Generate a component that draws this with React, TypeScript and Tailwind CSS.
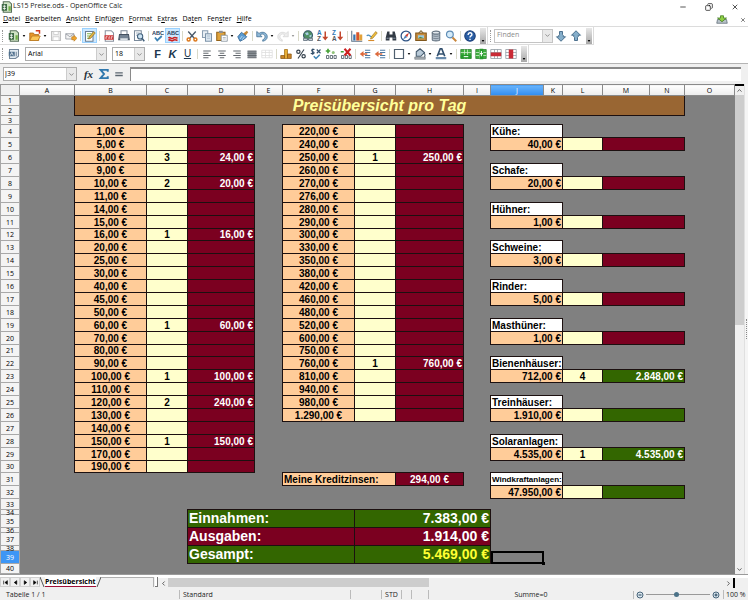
import React from "react";
import clsx from "clsx";
import { ChevronDown, ChevronLeft, ChevronRight, ChevronUp, Copy, Minus, X } from "lucide-react";

type Kind = "title" | "price" | "priceRight" | "count" | "loss" | "gain" | "label" | "small" | "gainTotal" | "lossTotal" | "result" | "interest" | "interestValue";

interface Cell {
  text?: string;
  kind: Kind;
  cols?: number;
  rows?: number;
  right?: boolean;
}

const COLUMNS = [
  { name: "A", width: "w-[55px]" },
  { name: "B", width: "w-[72px]" },
  { name: "C", width: "w-[41px]" },
  { name: "D", width: "w-[67px]" },
  { name: "E", width: "w-[28px]" },
  { name: "F", width: "w-[72px]" },
  { name: "G", width: "w-[41px]" },
  { name: "H", width: "w-[68px]" },
  { name: "I", width: "w-[27px]" },
  { name: "J", width: "w-[53px]" },
  { name: "K", width: "w-[19px]" },
  { name: "L", width: "w-[40px]" },
  { name: "M", width: "w-[47px]" },
  { name: "N", width: "w-[35px]" },
  { name: "O", width: "" },
];

// rows that differ from the default height of 13
const ROW_HEIGHTS: Record<number, number> = {
  1: 10, 2: 10, 3: 9, 12: 12, 21: 12, 30: 12, 33: 11, 34: 5, 36: 5, 38: 5, 40: 10,
};
const ROWS = Array.from({ length: 40 }, (_, i) => i + 1);
const rowHeight = (row: number) => ROW_HEIGHTS[row] ?? 13;

const KIND_STYLES: Record<Kind, string> = {
  title: "bg-[#996633] text-[#ffff99] text-center italic text-[16px] leading-[17px]",
  price: "bg-[#ffcc99] text-center",
  priceRight: "bg-[#ffcc99] text-right",
  count: "bg-[#ffffcc] text-center",
  loss: "bg-[#7b0020] text-white text-right",
  gain: "bg-[#336600] text-white text-right",
  label: "bg-white text-left",
  small: "bg-white text-left text-[8px]",
  gainTotal: "bg-[#336600] text-white text-[14px] leading-[15px]",
  lossTotal: "bg-[#7b0020] text-white text-[14px] leading-[15px]",
  result: "bg-[#336600] text-[#ffff33] text-[14px] leading-[15px]",
  interest: "bg-[#ffcc99] text-left",
  interestValue: "bg-[#7b0020] text-white text-center",
};

const LEFT = ["1", "5", "8", "9", "10", "11", "14", "15", "16", "20", "25", "30", "40", "45", "50", "60", "70", "80", "90", "100", "110", "120", "130", "140", "150", "170", "190"];
const MIDDLE = ["220", "240", "250", "260", "270", "276", "280", "290", "300", "330", "350", "380", "420", "460", "480", "520", "600", "750", "760", "810", "940", "980", "1.290"];

const LEFT_SOLD: Record<string, [string, string]> = {
  "8": ["3", "24"],
  "10": ["2", "20"],
  "16": ["1", "16"],
  "60": ["1", "60"],
  "100": ["1", "100"],
  "120": ["2", "240"],
  "150": ["1", "150"],
};
const MIDDLE_SOLD: Record<string, [string, string]> = {
  "250": ["1", "250"],
  "760": ["1", "760"],
};

const RIGHT = [
  { name: "Kühe:", price: "40" },
  { name: "Schafe:", price: "20" },
  { name: "Hühner:", price: "1" },
  { name: "Schweine:", price: "3" },
  { name: "Rinder:", price: "5" },
  { name: "Masthüner:", price: "1" },
  { name: "Bienenhäuser:", price: "712", count: "4", sum: "2.848", gain: true },
  { name: "Treinhäuser:", price: "1.910", gain: true },
  { name: "Solaranlagen:", price: "4.535", count: "1", sum: "4.535", gain: true },
  { name: "Windkraftanlagen:", price: "47.950", gain: true, small: true },
];

const euro = (value?: string) => (value ? `${value},00 €` : "");

const cells: Record<string, Cell> = {
  B1: { text: "Preisübersicht pro Tag", kind: "title", cols: 13, rows: 2 },
  F31: { text: "Meine Kreditzinsen:", kind: "interest", cols: 2 },
  H31: { text: euro("294"), kind: "interestValue" },
  D34: { text: "Einnahmen:", kind: "gainTotal", cols: 3, rows: 2 },
  G34: { text: euro("7.383"), kind: "gainTotal", cols: 3, rows: 2, right: true },
  D36: { text: "Ausgaben:", kind: "lossTotal", cols: 3, rows: 2 },
  G36: { text: euro("1.914"), kind: "lossTotal", cols: 3, rows: 2, right: true },
  D38: { text: "Gesampt:", kind: "gainTotal", cols: 3, rows: 2 },
  G38: { text: euro("5.469"), kind: "result", cols: 3, rows: 2, right: true },
};

const addBlock = (names: string[], list: string[], sold: Record<string, [string, string]>) => {
  list.forEach((value, i) => {
    const row = i + 4;
    cells[names[0] + row] = { text: euro(value), kind: "price" };
    cells[names[1] + row] = { text: sold[value]?.[0], kind: "count" };
    cells[names[2] + row] = { text: euro(sold[value]?.[1]), kind: "loss" };
  });
};
addBlock(["B", "C", "D"], LEFT, LEFT_SOLD);
addBlock(["F", "G", "H"], MIDDLE, MIDDLE_SOLD);

RIGHT.forEach((item, i) => {
  const row = 4 + i * 3;
  cells["J" + row] = { text: item.name, kind: item.small ? "small" : "label", cols: 2 };
  cells["J" + (row + 1)] = { text: euro(item.price), kind: "priceRight", cols: 2 };
  cells["L" + (row + 1)] = { text: item.count, kind: "count" };
  cells["M" + (row + 1)] = { text: euro(item.sum), kind: item.gain ? "gain" : "loss", cols: 2 };
});

// cells hidden below a merged one
const covered = new Set<string>();
Object.entries(cells).forEach(([key, cell]) => {
  const start = COLUMNS.findIndex((c) => c.name === key[0]);
  const row = Number(key.slice(1));
  for (let r = 0; r < (cell.rows ?? 1); r++) {
    for (let c = 0; c < (cell.cols ?? 1); c++) {
      if (r || c) covered.add(COLUMNS[start + c].name + (row + r));
    }
  }
});

/* ---------- icons ---------- */

const Icon = ({ children }: { children: React.ReactNode }) => (
  <svg viewBox="0 0 16 16" className="h-3 w-3 shrink-0" fill="none" strokeWidth="1.4">
    {children}
  </svg>
);

const CalcIcon = () => (
  <Icon>
    <path d="M3 1h8l3 3v11H3z" fill="#cfe3c4" stroke="#58705a" />
    <path d="M1 4h7v9H1z" fill="#3f6b46" />
    <path d="M2.500 7h4M2.500 10h4M4.500 5v7" stroke="#fff" strokeWidth="1" />
    <path d="M10 7h3v6h-3z" fill="#6fae45" />
  </Icon>
);
const OpenIcon = () => (
  <Icon>
    <path d="M1 4h5l1 2h6v8H1z" fill="#e8972a" stroke="#a8651a" strokeWidth="1" />
    <path d="M1 14l3-6h11l-3 6z" fill="#fbc657" stroke="#b8771f" strokeWidth="1" />
    <path d="M9 1h5v4" stroke="#d33c1c" strokeWidth="2" />
  </Icon>
);
const SaveIcon = () => (
  <Icon>
    <path d="M2 2h12v12H2z" fill="#ececec" stroke="#c0c0c0" />
    <path d="M5 2h6v4H5zM4 9h8v5H4z" fill="#fff" stroke="#c8c8c8" strokeWidth="1" />
  </Icon>
);
const MailIcon = () => (
  <Icon>
    <path d="M1 5h11v7H1z" fill="#f4f4f4" stroke="#8c9099" strokeWidth="1" />
    <path d="M1 5l5.500 4L12 5" stroke="#8c9099" strokeWidth="1" />
    <path d="M9 9h3V7l4 4-4 4v-2H9z" fill="#f0a42c" stroke="#ad6b12" strokeWidth="0.700" />
  </Icon>
);
const EditIcon = () => (
  <Icon>
    <path d="M2 2h10v13H2z" fill="#fff" stroke="#6a7f94" />
    <path d="M4 5h6M4 8h5M4 11h3" stroke="#7db54a" />
    <path d="M6 12l1-3 6-7 2 2-6 7z" fill="#e6b83d" stroke="#6b5622" strokeWidth="0.800" />
  </Icon>
);
const PdfIcon = () => (
  <Icon>
    <path d="M3 1h8l3 3v11H3z" fill="#fff" stroke="#8a93a0" />
    <path d="M2 7h12v6H2z" fill="#cf3434" />
    <path d="M4 12V9h2M8 12V9h1M11 12V9h2" stroke="#fff" strokeWidth="1" />
  </Icon>
);
const PrintIcon = () => (
  <Icon>
    <path d="M4 1h8v6H4z" fill="#fff" stroke="#7b8795" />
    <path d="M2 6h12l1 7H1z" fill="#738292" stroke="#445160" />
    <path d="M3 11h10v3H3z" fill="#d9dfe5" />
  </Icon>
);
const PreviewIcon = () => (
  <Icon>
    <path d="M2 1h9v13H2z" fill="#fff" stroke="#7b8a9b" />
    <path d="M4 4h5M4 7h2" stroke="#9fb1c2" />
    <circle cx="9.500" cy="8.500" r="3.500" fill="#cde4f3" stroke="#43617c" />
    <path d="M12 11l3 4" stroke="#43617c" strokeWidth="2" />
  </Icon>
);
const SpellIcon = ({ auto }: { auto?: boolean }) => (
  <Icon>
    <text x="8" y="7" textAnchor="middle" fontSize="7.500" fontWeight="bold" fill="#26415c" className="font-['Liberation_Sans',sans-serif]">ABC</text>
    {auto ? (
      <path d="M2 11c2-3 4 2 6 0s4-1 6 0M2 14c2-3 4 2 6 0s4-1 6 0" stroke="#cc2020" strokeWidth="2" />
    ) : (
      <path d="M4 10l3 4 6-6" stroke="#3d83b5" strokeWidth="2.400" />
    )}
  </Icon>
);
const CutIcon = () => (
  <Icon>
    <path d="M3 2l8 9M13 2L5 11" stroke="#4b5b6c" strokeWidth="1.800" />
    <circle cx="3.500" cy="12.500" r="2" stroke="#dd7a1e" strokeWidth="2" />
    <circle cx="12.500" cy="12.500" r="2" stroke="#dd7a1e" strokeWidth="2" />
  </Icon>
);
const CopyIcon = () => (
  <Icon>
    <path d="M2 1h7v9H2z" fill="#e9eff5" stroke="#8a9eb2" />
    <path d="M6 5h8v10H6z" fill="#dce7f1" stroke="#7f95aa" />
    <path d="M8 8h4M8 11h4" stroke="#9cb0c3" strokeWidth="1" />
  </Icon>
);
const PasteIcon = () => (
  <Icon>
    <path d="M1 3h11v11H1z" fill="#dfa33d" stroke="#956318" />
    <path d="M4 1h5v3H4z" fill="#8b8f96" />
    <path d="M7 7h8v8H7z" fill="#fff" stroke="#7a8794" strokeWidth="1" />
    <path d="M9 10h4M9 12h4" stroke="#9aa6b3" strokeWidth="1" />
  </Icon>
);
const BrushIcon = () => (
  <Icon>
    <path d="M13 1l2 2-4 5-3-3z" fill="#c58a3b" />
    <path d="M6 3l7 6-3 3-6 3-3-6z" fill="#5b9bd0" stroke="#2d5f8c" strokeWidth="1" />
    <path d="M4 12l3-4M7 13l3-4" stroke="#d8ebf8" strokeWidth="1" />
  </Icon>
);
const UndoIcon = () => (
  <Icon>
    <path d="M1 2v7h7L5.500 6.500C9 4 12 6 12 9c0 2-1 3-3 4v2c4-1 6-3 6-6 0-5-6-8-11-4.500z" fill="#8fb9d8" stroke="#3c6a8f" strokeWidth="1" />
  </Icon>
);
const RedoIcon = () => (
  <Icon>
    <path d="M15 2v7H8l2.500-2.500C7 4 4 6 4 9c0 2 1 3 3 4v2c-4-1-6-3-6-6 0-5 6-8 11-4.500z" fill="#ededed" stroke="#cfcfcf" strokeWidth="0.800" />
  </Icon>
);
const GlobeIcon = () => (
  <Icon>
    <circle cx="8" cy="7" r="6" fill="#4f8f63" stroke="#38566c" />
    <path d="M4 4l4-1 1 3-3 1zM9 8l4-2-1 4z" fill="#a9cfe8" />
    <path d="M2 11h5v3H2zM9 11h5v3H9z" fill="#c7d0d8" stroke="#566574" strokeWidth="1" />
  </Icon>
);
const SortIcon = ({ top, bottom }: { top: string; bottom: string }) => (
  <Icon>
    <g fontSize="8.500" fontWeight="bold" className="font-['Liberation_Sans',sans-serif]">
      <text x="0" y="7" fill="#2f78b5">{top}</text>
      <text x="0" y="15" fill="#50565c">{bottom}</text>
    </g>
    <path d="M10 2h2v7h3l-4 5-4-5h3z" fill="#c2482e" />
  </Icon>
);
const ChartIcon = () => (
  <Icon>
    <path d="M1 1v14h14" stroke="#5d7288" />
    <path d="M3 6h3v8H3z" fill="#3775ae" />
    <path d="M7 3h4v11H7z" fill="#d7562b" />
    <path d="M11 6h4v8h-4z" fill="#e2a23b" />
  </Icon>
);
const DrawIcon = () => (
  <Icon>
    <path d="M1 8c3-4 5 3 8 1" stroke="#4b8ec0" strokeWidth="1.600" />
    <path d="M6 12l1-3 6-7 2 2-6 7z" fill="#f0bd3b" stroke="#916a1a" strokeWidth="0.800" />
    <path d="M3 14h8" stroke="#d78a2b" strokeWidth="1.500" />
  </Icon>
);
const FindIcon = () => (
  <Icon>
    <path d="M3 2h3v4h4V2h3l2 8v4h-5v-4H6v4H1v-4z" fill="#333b45" />
    <path d="M2 11h3M11 11h3" stroke="#8796a6" />
  </Icon>
);
const CompassIcon = () => (
  <Icon>
    <circle cx="8" cy="8" r="6.500" fill="#fff" stroke="#2f5485" strokeWidth="1.700" />
    <path d="M12 3.500L9.500 9.500 7 7z" fill="#d03a2c" />
    <path d="M4 12.500L7 7l2.500 2.500z" fill="#4d82ba" />
  </Icon>
);
const GalleryIcon = () => (
  <Icon>
    <path d="M5 4l3-3 3 3" stroke="#7a6131" />
    <path d="M1 4h14v10H1z" fill="#c78d3e" stroke="#80571c" />
    <path d="M4 7h8v4H4z" fill="#9ccbe4" />
    <path d="M4 11l3-2 5 2z" fill="#4e8b42" />
  </Icon>
);
const DatabaseIcon = () => (
  <Icon>
    <path d="M3 3v10c0 2 10 2 10 0V3" fill="#b4bfca" stroke="#677583" />
    <ellipse cx="8" cy="3.500" rx="5" ry="2" fill="#e3e9ee" stroke="#677583" />
    <path d="M3 7c1 2 9 2 10 0M3 10c1 2 9 2 10 0" stroke="#677583" strokeWidth="1" />
  </Icon>
);
const ZoomIcon = () => (
  <Icon>
    <circle cx="6.500" cy="6" r="4.500" fill="#d5ebf9" stroke="#5f8cb5" strokeWidth="1.600" />
    <path d="M10 10l5 5" stroke="#c9863b" strokeWidth="2.500" />
  </Icon>
);
const HelpIcon = () => (
  <Icon>
    <circle cx="8" cy="8" r="7" fill="#2b5fa5" stroke="#1c3f77" />
    <path d="M5.500 6.500c0-4 5.500-3.500 5 0C10.300 8 8 8 8 10M8 11.500v1.800" stroke="#fff" strokeWidth="1.900" />
  </Icon>
);
const FindArrow = ({ up }: { up?: boolean }) => (
  <Icon>
    <path
      d={up ? "M8 1l6 6h-3v2l-1 1v4H6v-4L5 9V7H2z" : "M8 15l6-6h-3V7l-1-1V2H6v4L5 7v2H2z"}
      fill="#86afcb"
      stroke="#3f6584"
      strokeWidth="1.200"
    />
  </Icon>
);
const StylesIcon = () => (
  <Icon>
    <path d="M2 2h12v9l-4 3H2z" fill="#e3ebf2" stroke="#73869a" />
    <path d="M1 5h8v6H1z" fill="#4f708e" />
    <path d="M3 10l2-4 2 4" stroke="#fff" strokeWidth="1" />
    <path d="M11 5v6" stroke="#73869a" />
  </Icon>
);
const AlignIcon = ({ d }: { d: string }) => (
  <Icon>
    <path d={d} stroke="#5e6369" strokeWidth="1.300" />
  </Icon>
);
const JustifyIcon = () => (
  <Icon>
    <path d="M2 4h12v9H2z" fill="#8c9298" />
    <path d="M2 4h12M2 7h12M2 10h12M2 13h12" stroke="#5e6369" strokeWidth="1.200" />
  </Icon>
);
const MergeIcon = () => (
  <Icon>
    <path d="M1 3h14v10H1zM1 6h14M1 10h14M6 3v10M11 3v10" stroke="#dcdcdc" strokeWidth="1" />
  </Icon>
);
const CoinsIcon = () => (
  <Icon>
    <path d="M6 2h4v12H6z" fill="#e6ad35" stroke="#a36f16" strokeWidth="1" />
    <path d="M1 10h5v4H1zM10 8h5v6h-5z" fill="#c98426" stroke="#8c5a14" strokeWidth="1" />
  </Icon>
);
const PercentIcon = () => (
  <Icon>
    <circle cx="4.500" cy="5" r="2.200" stroke="#34404c" strokeWidth="1.600" />
    <circle cx="11.500" cy="11" r="2.200" stroke="#34404c" strokeWidth="1.600" />
    <path d="M12 2L4 14" stroke="#34404c" strokeWidth="1.500" />
  </Icon>
);
const StandardIcon = () => (
  <Icon>
    <path d="M6 2C2 1 1 4 4 5s1 4-3 2M3.500 1v8M9 2l5 5M14 2L9 7" stroke="#34506b" strokeWidth="1.500" />
    <path d="M5 11l3 3 5-5" stroke="#3d83b5" strokeWidth="2" />
  </Icon>
);
const DecimalIcon = ({ remove }: { remove?: boolean }) => (
  <Icon>
    <path d="M2 10h3v4H2zM7 10h3v4H7zM12 10h3v4h-3z" stroke="#4a5763" strokeWidth="1.100" />
    {remove ? (
      <>
        <path d="M6 1l8 9M14 1l-8 9" stroke="#cc2222" strokeWidth="2.800" />
        <path d="M1 5h4" stroke="#3f9a34" strokeWidth="2" />
      </>
    ) : (
      <>
        <path d="M1 4h6M4 1v6" stroke="#45a136" strokeWidth="2.200" />
        <circle cx="11" cy="6" r="2" fill="#8fc27a" />
      </>
    )}
  </Icon>
);
const IndentIcon = () => (
  <Icon>
    <path d="M8 3h7M8 6h7M8 10h7M8 13h7" stroke="#4b79a3" strokeWidth="1.400" />
    <path d="M1 8l5-4v3h5v2H6v3z" fill="#dd6a3c" />
  </Icon>
);
const BorderIcon = () => (
  <Icon>
    <path d="M2 2h12v12H2z" fill="#fff" stroke="#4f5f6f" strokeWidth="1.600" />
  </Icon>
);
const BucketIcon = () => (
  <Icon>
    <path d="M3 5l5-4 6 5-5 5H3z" fill="#b9cad8" stroke="#42586c" />
    <path d="M13 6c2 2 2 4 1 6" stroke="#42586c" />
    <path d="M1 12h14v3H1z" fill="#a7adb3" stroke="#707880" strokeWidth="0.800" />
  </Icon>
);
const FontColorIcon = () => (
  <Icon>
    <path d="M3 11L7 1h2l4 10M5 8h6" stroke="#314f6d" strokeWidth="2.200" />
    <path d="M1 12h14v3H1z" fill="#6a8cad" />
  </Icon>
);
const InsertIcon = ({ column }: { column?: boolean }) => (
  <Icon>
    <path d="M1 2h14v12H1z" fill="#3fae3f" stroke="#2c7d30" strokeWidth="1" />
    <path d="M1 6h14M1 10h14M6 2v12M10 2v12" stroke="#d6efd3" strokeWidth="1" />
    <path d={column ? "M6 1h5v14H6z" : "M1 9h14v5H1z"} fill="#259a2b" />
    <path d={column ? "M8.500 4v7M6.500 7.500h4" : "M5 11.500h6"} stroke="#fff" strokeWidth="1.400" />
  </Icon>
);
const DeleteIcon = ({ column }: { column?: boolean }) => (
  <Icon>
    <path d="M1 2h14v12H1zM1 6h14M1 10h14M6 2v12M10 2v12" stroke="#8c979f" strokeWidth="1" />
    <path d={column ? "M5 2h6v12H5z" : "M1 6h14v5H1z"} fill="#c92a35" />
  </Icon>
);
const UpdateIcon = () => (
  <svg viewBox="0 0 16 12" className="h-[9px] w-3" fill="none">
    <path d="M2 6l-1 5h14l-1-5z" fill="#b8c2ca" stroke="#5b6873" />
    <path d="M6 1h4v3h4l-6 5-6-5h4z" fill="#8fcf45" stroke="#3f7a1c" />
  </svg>
);

/* ---------- toolbar parts ---------- */

const Tool = ({ label, active, children }: { label: string; active?: boolean; children: React.ReactNode }) => (
  <button
    aria-label={label}
    className={clsx(
      "flex h-[15px] w-[15px] shrink-0 items-center justify-center",
      active && "border border-[#99d1ff] bg-[#cce8ff]"
    )}
  >
    {children}
  </button>
);

const Arrow = ({ label, muted }: { label: string; muted?: boolean }) => (
  <button aria-label={label} className="flex h-[15px] w-[6px] shrink-0 items-center justify-center">
    <svg viewBox="0 0 4 3" className="h-[2px] w-[4px]">
      <path d="M0 0h4L2 3z" fill={muted ? "#999" : "#111"} />
    </svg>
  </button>
);

const Sep = () => (
  <div className="flex w-1 shrink-0 justify-center">
    <div className="h-[10px] w-px bg-[#d9d9c8]" />
  </div>
);

const Grip = () => <div className="ml-[2px] mr-[3px] h-3 w-px shrink-0 border-l border-dotted border-[#999]" />;

const Overflow = () => (
  <button
    aria-label="Weitere Symbole"
    className="ml-[3px] flex h-[16px] w-[6px] shrink-0 items-end justify-center bg-linear-to-b from-[#e8e8e8] to-[#a8a8a8] pb-[2px]"
  >
    <svg viewBox="0 0 4 3" className="h-[2px] w-[4px]">
      <path d="M0 0h4L2 3z" fill="#000" />
    </svg>
  </button>
);

const DropButton = ({ label }: { label: string }) => (
  <button aria-label={label} className="flex w-[10px] shrink-0 items-center justify-center border-l border-[#ccc] bg-[#e9e9e9]">
    <ChevronDown className="h-[7px] w-[7px] text-[#555]" />
  </button>
);

const Select = ({ label, value, width }: { label: string; value: string; width: string }) => (
  <div className={clsx("relative mr-[5px] flex h-[14px] shrink-0 border border-[#acacac] bg-white", width)}>
    <select aria-label={label} defaultValue={value} className="w-full appearance-none bg-transparent pl-[2px] text-[7px] leading-[10px] outline-none">
      <option>{value}</option>
    </select>
    <span className="pointer-events-none absolute inset-y-0 right-0 flex w-[10px] items-center justify-center border-l border-[#ccc] bg-[#e9e9e9]">
      <ChevronDown className="h-[7px] w-[7px] text-[#555]" />
    </span>
  </div>
);

/* ---------- window parts ---------- */

const TitleBar = () => (
  <header className="flex h-[13px] items-center pl-[1px] pr-[9px]">
    <CalcIcon />
    <h1 className="flex-1 text-[7px] text-[#222]">LS15 Preise.ods - OpenOffice Calc</h1>
    <div className="flex gap-[18px]">
      <button aria-label="Minimieren"><Minus className="h-2 w-2" /></button>
      <button aria-label="Wiederherstellen"><Copy className="h-2 w-2 -scale-x-100" /></button>
      <button aria-label="Schließen"><X className="h-2 w-2" /></button>
    </div>
  </header>
);

const MENU = [
  ["", "D", "atei"],
  ["", "B", "earbeiten"],
  ["", "A", "nsicht"],
  ["", "E", "infügen"],
  ["", "F", "ormat"],
  ["E", "x", "tras"],
  ["Da", "t", "en"],
  ["Fen", "s", "ter"],
  ["", "H", "ilfe"],
];

const MenuBar = () => (
  <nav className="flex h-[14px] items-center border-b border-[#dcdcdc] pl-[3px] pr-[2px]">
    <div className="flex flex-1 gap-[5px]">
      {MENU.map(([before, key, after]) => (
        <button key={before + key} className="text-[7px] text-black">
          {before}
          <span className="underline">{key}</span>
          {after}
        </button>
      ))}
    </div>
    <button aria-label="Updates" className="mr-[12px]"><UpdateIcon /></button>
    <button aria-label="Dokument schließen"><X className="h-[6px] w-[6px]" /></button>
  </nav>
);

const StandardBar = () => (
  <div className="flex">
    <div className="flex h-[18px] items-center border-b border-r border-[#dcdcdc] pr-[1px]">
      <Grip />
      <Tool label="Neu"><CalcIcon /></Tool>
      <Arrow label="Neu Auswahl" />
      <Tool label="Öffnen"><OpenIcon /></Tool>
      <Arrow label="Öffnen Auswahl" />
      <Tool label="Speichern"><SaveIcon /></Tool>
      <Tool label="E-Mail"><MailIcon /></Tool>
      <Sep />
      <Tool label="Bearbeiten" active><EditIcon /></Tool>
      <Sep />
      <Tool label="PDF"><PdfIcon /></Tool>
      <Tool label="Drucken"><PrintIcon /></Tool>
      <Tool label="Seitenansicht"><PreviewIcon /></Tool>
      <Sep />
      <Tool label="Rechtschreibung"><SpellIcon /></Tool>
      <Tool label="Automatische Prüfung" active><SpellIcon auto /></Tool>
      <Sep />
      <Tool label="Ausschneiden"><CutIcon /></Tool>
      <Tool label="Kopieren"><CopyIcon /></Tool>
      <Tool label="Einfügen"><PasteIcon /></Tool>
      <Arrow label="Einfügen Auswahl" />
      <Tool label="Format übertragen"><BrushIcon /></Tool>
      <Sep />
      <Tool label="Rückgängig"><UndoIcon /></Tool>
      <Arrow label="Rückgängig Auswahl" />
      <Tool label="Wiederherstellen"><RedoIcon /></Tool>
      <Arrow label="Wiederherstellen Auswahl" muted />
      <Sep />
      <Tool label="Hyperlink"><GlobeIcon /></Tool>
      <Tool label="Aufsteigend sortieren"><SortIcon top="A" bottom="Z" /></Tool>
      <Tool label="Absteigend sortieren"><SortIcon top="Z" bottom="A" /></Tool>
      <Sep />
      <Tool label="Diagramm"><ChartIcon /></Tool>
      <Tool label="Zeichnen"><DrawIcon /></Tool>
      <Sep />
      <Tool label="Suchen"><FindIcon /></Tool>
      <Tool label="Navigator"><CompassIcon /></Tool>
      <Tool label="Gallery"><GalleryIcon /></Tool>
      <Tool label="Datenquellen"><DatabaseIcon /></Tool>
      <Tool label="Maßstab"><ZoomIcon /></Tool>
      <Sep />
      <Tool label="Hilfe"><HelpIcon /></Tool>
      <Overflow />
    </div>
    <div className="flex h-[18px] items-center border-b border-r border-[#dcdcdc] pr-[1px]">
      <Grip />
      <div className="flex h-[14px] w-[59px] border border-[#c4c4c4] bg-white">
        <input aria-label="Finden" placeholder="Finden" className="min-w-0 flex-1 pl-[2px] text-[7px] outline-none placeholder:text-[#8a8a8a]" />
        <DropButton label="Suchverlauf" />
      </div>
      <Tool label="Weitersuchen"><FindArrow /></Tool>
      <Tool label="Rückwärts suchen"><FindArrow up /></Tool>
      <Overflow />
    </div>
  </div>
);

const FormatBar = () => (
  <div className="flex border-b border-[#b4b4b4]">
    <div className="flex h-[18px] items-center border-r border-[#dcdcdc] pr-[1px]">
      <Grip />
      <Tool label="Formatvorlagen"><StylesIcon /></Tool>
      <div className="w-1" />
      <Select label="Schriftart" value="Arial" width="w-[82px]" />
      <Select label="Schriftgröße" value="18" width="w-[33px]" />
      <Tool label="Fett"><span className="font-['Liberation_Sans',sans-serif] text-[11px] font-bold leading-none text-[#20364d]">F</span></Tool>
      <Tool label="Kursiv"><span className="font-['Liberation_Sans',sans-serif] text-[11px] font-bold italic leading-none text-[#20364d]">K</span></Tool>
      <Tool label="Unterstrichen"><span className="font-['Liberation_Sans',sans-serif] text-[10px] leading-none text-[#20364d] underline">U</span></Tool>
      <Sep />
      <Tool label="Linksbündig"><AlignIcon d="M3 4h10M3 7h7M3 10h10M3 13h7" /></Tool>
      <Tool label="Zentriert"><AlignIcon d="M3 4h10M5 7h6M3 10h10M5 13h6" /></Tool>
      <Tool label="Rechtsbündig"><AlignIcon d="M3 4h10M6 7h7M3 10h10M6 13h7" /></Tool>
      <Tool label="Blocksatz"><JustifyIcon /></Tool>
      <Tool label="Zellen verbinden"><MergeIcon /></Tool>
      <Sep />
      <Tool label="Währung"><CoinsIcon /></Tool>
      <Tool label="Prozent"><PercentIcon /></Tool>
      <Tool label="Standardformat"><StandardIcon /></Tool>
      <Tool label="Dezimalstelle hinzufügen"><DecimalIcon /></Tool>
      <Tool label="Dezimalstelle löschen"><DecimalIcon remove /></Tool>
      <Sep />
      <Tool label="Einzug vermindern"><IndentIcon /></Tool>
      <Tool label="Einzug erhöhen"><IndentIcon /></Tool>
      <Sep />
      <Tool label="Umrandung"><BorderIcon /></Tool>
      <Arrow label="Umrandung Auswahl" />
      <Tool label="Hintergrundfarbe"><BucketIcon /></Tool>
      <Arrow label="Hintergrundfarbe Auswahl" />
      <Tool label="Schriftfarbe"><FontColorIcon /></Tool>
      <Arrow label="Schriftfarbe Auswahl" />
      <Sep />
      <Tool label="Zeilen einfügen"><InsertIcon /></Tool>
      <Tool label="Spalten einfügen"><InsertIcon column /></Tool>
      <Tool label="Zeilen löschen"><DeleteIcon /></Tool>
      <Tool label="Spalten löschen"><DeleteIcon column /></Tool>
      <Overflow />
    </div>
  </div>
);

const FormulaBar = () => (
  <div className="flex h-5 items-center bg-[#f0f0f0] pl-[3px] pr-[7px]">
    <div className="mr-[4px] flex h-[14px] w-[74px] border border-[#acacac] bg-white">
      <input aria-label="Namensfeld" defaultValue="J39" className="min-w-0 flex-1 pl-[1px] text-[7px] outline-none" />
      <DropButton label="Bereiche" />
    </div>
    <Tool label="Funktionsassistent">
      <span className="font-['Liberation_Serif',serif] text-[11px] font-bold italic leading-none text-[#26303a]">fx</span>
    </Tool>
    <Tool label="Summe">
      <Icon><path d="M13 5V2.500H3.500L8 8l-4.500 5.500H13V11" stroke="#2f77ad" strokeWidth="2.600" /></Icon>
    </Tool>
    <Tool label="Funktion">
      <Icon><path d="M3 6.500h10M3 10h10" stroke="#5b6670" strokeWidth="1.800" /></Icon>
    </Tool>
    <input
      aria-label="Eingabezeile"
      className="ml-[4px] h-[14px] min-w-0 flex-1 border-l border-t-2 border-[#8a8a8a] bg-white px-1 text-[7px] outline-none"
    />
  </div>
);

const Sheet = () => (
  <table className="w-full table-fixed border-collapse bg-[#808080] font-['Liberation_Sans',Arial,sans-serif] text-[10px] font-bold leading-[11px] text-black">
    <colgroup>
      <col className="w-[19px]" />
      {COLUMNS.map((c) => (
        <col key={c.name} className={c.width} />
      ))}
    </colgroup>
    <thead className="font-['Open_Sans',sans-serif] text-[7px] leading-[9px]">
      <tr className="h-[11px]">
        <th className="border border-[#9a9a9a] bg-[#f0f0f0] p-0" />
        {COLUMNS.map((c) => (
          <th
            key={c.name}
            scope="col"
            className={clsx(
              "border border-[#8a8a8a] p-0 font-normal",
              c.name === "J" ? "bg-linear-to-b from-[#69b4fb] to-[#2f8df0] text-white" : "bg-linear-to-b from-white to-[#ececec]"
            )}
          >
            {c.name}
          </th>
        ))}
      </tr>
    </thead>
    <tbody>
      {ROWS.map((row) => (
        <tr key={row} style={{ height: rowHeight(row) }}>
          <th
            scope="row"
            className={clsx(
              "border border-[#a8a8a8] p-0 font-['Open_Sans',sans-serif] text-[7px] font-normal",
              row === 39 ? "bg-[#3d96f5] text-white" : "bg-[#f4f4f4]"
            )}
          >
            <div className="flex items-center justify-center leading-none" style={{ height: rowHeight(row) - 2 }}>
              {row}
            </div>
          </th>
          {COLUMNS.map(({ name }) => {
            const key = name + row;
            if (covered.has(key)) return null;
            const cell = cells[key];
            if (key === "J39") {
              return (
                <td key={key} className="p-0">
                  <div className="relative h-[13px] border-2 border-black">
                    <span className="absolute -bottom-[3px] -right-[3px] h-[3px] w-[3px] bg-black" />
                  </div>
                </td>
              );
            }
            if (!cell) return <td key={key} className="p-0" />;
            return (
              <td
                key={key}
                colSpan={cell.cols}
                rowSpan={cell.rows}
                className={clsx(
                  "whitespace-nowrap border border-[#1c1010] px-px py-0 align-middle",
                  KIND_STYLES[cell.kind],
                  cell.right && "text-right"
                )}
              >
                {cell.text}
              </td>
            );
          })}
        </tr>
      ))}
    </tbody>
  </table>
);

const VerticalScroll = () => (
  <div className="flex w-[10px] shrink-0 flex-col border-r border-[#e0e0e0] bg-[#f0f0f0]">
    <div className="h-[2px] bg-black" />
    <button aria-label="Nach oben" className="flex h-[9px] items-center justify-center"><ChevronUp className="h-[7px] w-[7px]" /></button>
    <div className="flex-1">
      <div className="h-[230px] bg-[#cdcdcd]" />
    </div>
    <button aria-label="Nach unten" className="flex h-[9px] items-center justify-center"><ChevronDown className="h-[7px] w-[7px]" /></button>
  </div>
);

const NAV = [
  { label: "Erste Tabelle", d: "M1 1v6M7 1L3 4l4 3z" },
  { label: "Vorige Tabelle", d: "M6 1L2 4l4 3z" },
  { label: "Nächste Tabelle", d: "M2 1l4 3-4 3z" },
  { label: "Letzte Tabelle", d: "M7 1v6M1 1l4 3-4 3z" },
];

const TabBar = () => (
  <div className="flex h-[14px] items-stretch border-t border-[#9a9a9a] bg-[#f0f0f0]">
    <div className="flex w-[158px] shrink-0 items-end border-t-2 border-white pb-[1px]">
      {NAV.map((n) => (
        <button key={n.label} aria-label={n.label} className="flex h-[10px] w-[10px] items-center justify-center border border-[#d0d0d0]">
          <svg viewBox="0 0 8 8" className="h-[5px] w-[5px]">
            <path d={n.d} fill="#000" stroke="#000" strokeWidth="1" />
          </svg>
        </button>
      ))}
      <svg viewBox="0 0 5 10" className="h-[10px] w-[5px]"><path d="M0 0l4 10" stroke="#555" /></svg>
      <button className="h-[10px] border-b border-[#a01038] bg-white text-[7px] font-bold leading-[9px]">Preisübersicht</button>
      <svg viewBox="0 0 5 10" className="h-[10px] w-[5px]"><path d="M5 0L1 10" stroke="#555" /></svg>
      <div className="h-[10px] flex-1 border-r border-t border-[#b0b0b0]" />
      <div className="ml-[1px] h-[10px] w-[3px] border-b border-r border-[#777] bg-white" />
    </div>
    <div className="flex flex-1 items-stretch border-t-[3px] border-white">
      <button aria-label="Nach links" className="flex w-[10px] items-center justify-center"><ChevronLeft className="h-[7px] w-[7px]" /></button>
      <div className="mb-[1px] flex-1">
        <div className="h-full w-[47%] bg-[#cdcdcd]" />
      </div>
      <button aria-label="Nach rechts" className="flex w-[10px] items-center justify-center"><ChevronRight className="h-[7px] w-[7px]" /></button>
      <div className="w-[2px] bg-black" />
      <div className="w-[13px]" />
    </div>
  </div>
);

const StatusBar = () => (
  <footer className="flex h-[13px] items-center bg-[#f0f0f0] text-[7px] leading-[9px] text-[#222]">
    <div className="w-[179px] pl-[6px]">Tabelle 1 / 1</div>
    <div className="w-[171px] border-l border-[#bbb] pl-[3px]">Standard</div>
    <div className="h-[9px] w-[31px] border-l border-[#bbb]" />
    <div className="w-[20px] border-l border-[#bbb] text-center">STD</div>
    <div className="h-[9px] w-[10px] border-l border-[#bbb]" />
    <div className="h-[9px] w-[17px] border-l border-[#bbb]" />
    <div className="flex-1 border-l border-[#bbb] text-center">Summe=0</div>
    <div className="flex w-[90px] items-center gap-[2px] border-l border-[#bbb] pl-[2px]">
      <button aria-label="Verkleinern">
        <svg viewBox="0 0 8 8" className="h-2 w-2"><circle cx="4" cy="4" r="3" fill="#d9e6ee" stroke="#48647a" /><path d="M2.500 4h3" stroke="#24425a" /></svg>
      </button>
      <input
        type="range"
        aria-label="Maßstab"
        defaultValue={48}
        className="h-[7px] w-[64px] appearance-none bg-transparent [&::-webkit-slider-runnable-track]:h-px [&::-webkit-slider-runnable-track]:bg-[#999] [&::-webkit-slider-thumb]:-mt-[2px] [&::-webkit-slider-thumb]:h-[5px] [&::-webkit-slider-thumb]:w-[5px] [&::-webkit-slider-thumb]:appearance-none [&::-webkit-slider-thumb]:rounded-full [&::-webkit-slider-thumb]:bg-[#4b7288]"
      />
      <button aria-label="Vergrößern">
        <svg viewBox="0 0 8 8" className="h-2 w-2"><circle cx="4" cy="4" r="3" fill="#d9e6ee" stroke="#48647a" /><path d="M2.500 4h3M4 2.500v3" stroke="#24425a" /></svg>
      </button>
    </div>
    <div className="w-[25px] border-l border-[#bbb] pl-[2px]">100 %</div>
  </footer>
);

const App = () => {
  return (
    <div className="flex min-h-screen flex-col bg-white font-['Open_Sans','Noto_Sans',sans-serif] text-black">
      <TitleBar />
      <MenuBar />
      <StandardBar />
      <FormatBar />
      <FormulaBar />
      <main className="flex flex-1">
        <div className="min-w-0 flex-1 bg-[#808080]">
          <Sheet />
        </div>
        <VerticalScroll />
        <div className="flex w-[3px] shrink-0 items-center bg-[#f5f5f5]">
          <div className="ml-[1px] h-5 border-l border-dotted border-[#888]" />
        </div>
      </main>
      <TabBar />
      <StatusBar />
    </div>
  );
};

export default App;
